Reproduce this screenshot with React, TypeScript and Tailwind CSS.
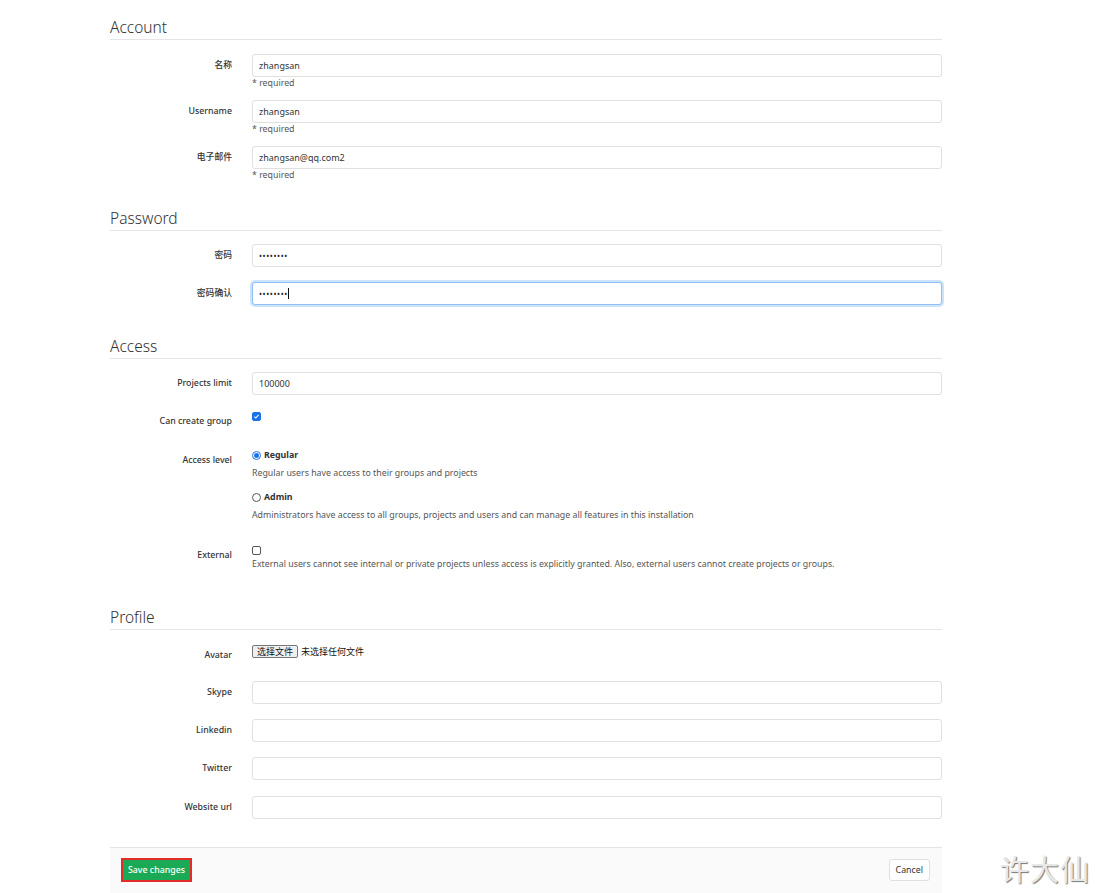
import React from "react";

const font = { fontFamily: '"Noto Sans", "Noto Sans CJK SC", sans-serif' };

interface SectionProps {
    title: string;
    top: string;
}

function SectionTitle(props: SectionProps) {
    return (
        <div className={`${props.top} border-b border-[#e5e5e5] pb-[2px]`}>
            <h4 className="text-[15.5px] leading-[20px] text-[#333] font-light">{props.title}</h4>
        </div>
    );
}

interface FieldProps {
    label: string;
    value?: string;
    type?: string;
    help?: string;
    focused?: boolean;
    className?: string;
}

function Field(props: FieldProps) {
    const border = props.focused
        ? "border-[#8fbff5] shadow-[0_0_0_2px_rgba(143,191,245,0.45)]"
        : "border-[#e0e0e0]";
    return (
        <div className={`flex ${props.className || ""}`}>
            <label className="w-[122px] shrink-0 text-right text-[8.8px] leading-[23px] font-medium text-[#333]">
                {props.label}
            </label>
            <div className="ml-[20px] flex-1">
                <div
                    className={`h-[23px] rounded-[3px] border bg-white px-[6px] flex items-center text-[9px] text-[#333] ${border}`}
                >
                    {props.type === "password" ? (
                        <span className="flex items-center">
                            <span className="text-[8px] leading-none tracking-[0.6px] text-[#222]">••••••••</span>
                            {props.focused && <span className="inline-block w-[1px] h-[11px] bg-[#111]" />}
                        </span>
                    ) : (
                        <span>{props.value}</span>
                    )}
                </div>
                {props.help && (
                    <div className="text-[8.8px] leading-[12px] text-[#555]">{props.help}</div>
                )}
            </div>
        </div>
    );
}

function Box(props: { checked?: boolean }) {
    return (
        <span
            className={`inline-flex items-center justify-center w-[9px] h-[9px] rounded-[2px] border ${
                props.checked ? "bg-[#1a73e8] border-[#1a73e8]" : "bg-white border-[#555]"
            }`}
        >
            {props.checked && (
                <svg viewBox="0 0 10 10" className="w-[7px] h-[7px]">
                    <path d="M2 5.2l2 2 4-4.4" fill="none" stroke="#fff" strokeWidth="1.6" />
                </svg>
            )}
        </span>
    );
}

function Radio(props: { checked?: boolean }) {
    return (
        <span
            className={`inline-flex items-center justify-center w-[9px] h-[9px] rounded-full border ${
                props.checked ? "border-[#1a73e8]" : "border-[#555]"
            }`}
        >
            {props.checked && <span className="w-[5px] h-[5px] rounded-full bg-[#1a73e8]" />}
        </span>
    );
}

const labelCls = "w-[122px] shrink-0 text-right text-[8.8px] leading-[12px] font-medium text-[#333]";

export default function App() {
    return (
        <div className="relative min-h-[893px] bg-white overflow-hidden" style={font}>
            <div className="ml-[110px] w-[832px]">
                <SectionTitle title="Account" top="pt-[17px]" />
                <Field className="mt-[14px]" label="名称" value="zhangsan" help="* required" />
                <Field className="mt-[11px]" label="Username" value="zhangsan" help="* required" />
                <Field className="mt-[11px]" label="电子邮件" value="zhangsan@qq.com2" help="* required" />

                <SectionTitle title="Password" top="mt-[27px]" />
                <Field className="mt-[13px]" label="密码" type="password" />
                <Field className="mt-[15px]" label="密码确认" type="password" focused />

                <SectionTitle title="Access" top="mt-[31px]" />
                <Field className="mt-[13px]" label="Projects limit" value="100000" />

                <div className="flex mt-[15px]">
                    <div className={`${labelCls} pt-[5px]`}>Can create group</div>
                    <div className="ml-[20px] pt-[2px] flex items-start">
                        <Box checked />
                    </div>
                </div>

                <div className="flex mt-[22px]">
                    <div className={`${labelCls} pt-[5px]`}>Access level</div>
                    <div className="ml-[20px] text-[8.8px] leading-[12px] text-[#333]">
                        <div className="flex items-center gap-[3px] font-bold">
                            <Radio checked /> Regular
                        </div>
                        <div className="mt-[6px] text-[#555]">Regular users have access to their groups and projects</div>
                        <div className="mt-[12px] flex items-center gap-[3px] font-bold">
                            <Radio /> Admin
                        </div>
                        <div className="mt-[6px] text-[#555]">
                            Administrators have access to all groups, projects and users and can manage all features in this installation
                        </div>
                    </div>
                </div>

                <div className="flex mt-[23px]">
                    <div className={`${labelCls} pt-[5px]`}>External</div>
                    <div className="ml-[20px] text-[8.8px] leading-[12px] text-[#555]">
                        <div className="pt-[2px] h-[14px] flex items-start">
                            <Box />
                        </div>
                        <div>
                            External users cannot see internal or private projects unless access is explicitly granted. Also, external users cannot create projects or groups.
                        </div>
                    </div>
                </div>

                <SectionTitle title="Profile" top="mt-[37px]" />
                <div className="flex mt-[12px]">
                    <div className={`${labelCls} pt-[7px]`}>Avatar</div>
                    <div className="ml-[20px] flex items-center text-[9px] leading-[12px] text-[#111]">
                        <span className="border border-[#767676] bg-[#efefef] rounded-[2px] px-[4px] leading-[11px]">选择文件</span>
                        <span className="ml-[3px]">未选择任何文件</span>
                    </div>
                </div>
                <Field className="mt-[20px]" label="Skype" />
                <Field className="mt-[15px]" label="Linkedin" />
                <Field className="mt-[15px]" label="Twitter" />
                <Field className="mt-[16px]" label="Website url" />

                <div className="mt-[28px] h-[50px] border-t border-[#e5e5e5] bg-[#fafafa] flex items-start justify-between pt-[10px] pl-[11px] pr-[12px]">
                    <div className="border-2 border-[#e52a2a] flex">
                        <button className="bg-[#1aaa55] text-white text-[8.8px] leading-[20px] px-[5px] h-[20px] font-medium">
                            Save changes
                        </button>
                    </div>
                    <button className="mt-[1px] h-[22px] px-[6px] bg-white border border-[#e0e0e0] rounded-[3px] text-[8.8px] leading-[20px] text-[#333]">
                        Cancel
                    </button>
                </div>
            </div>

            <div
                className="absolute left-[1000px] top-[852px] text-[29px] leading-[36px] text-[#e8e8e8] tracking-[1px]"
                style={{ textShadow: "1px 1px 1px #777" }}
            >
                许大仙
            </div>
        </div>
    );
}
